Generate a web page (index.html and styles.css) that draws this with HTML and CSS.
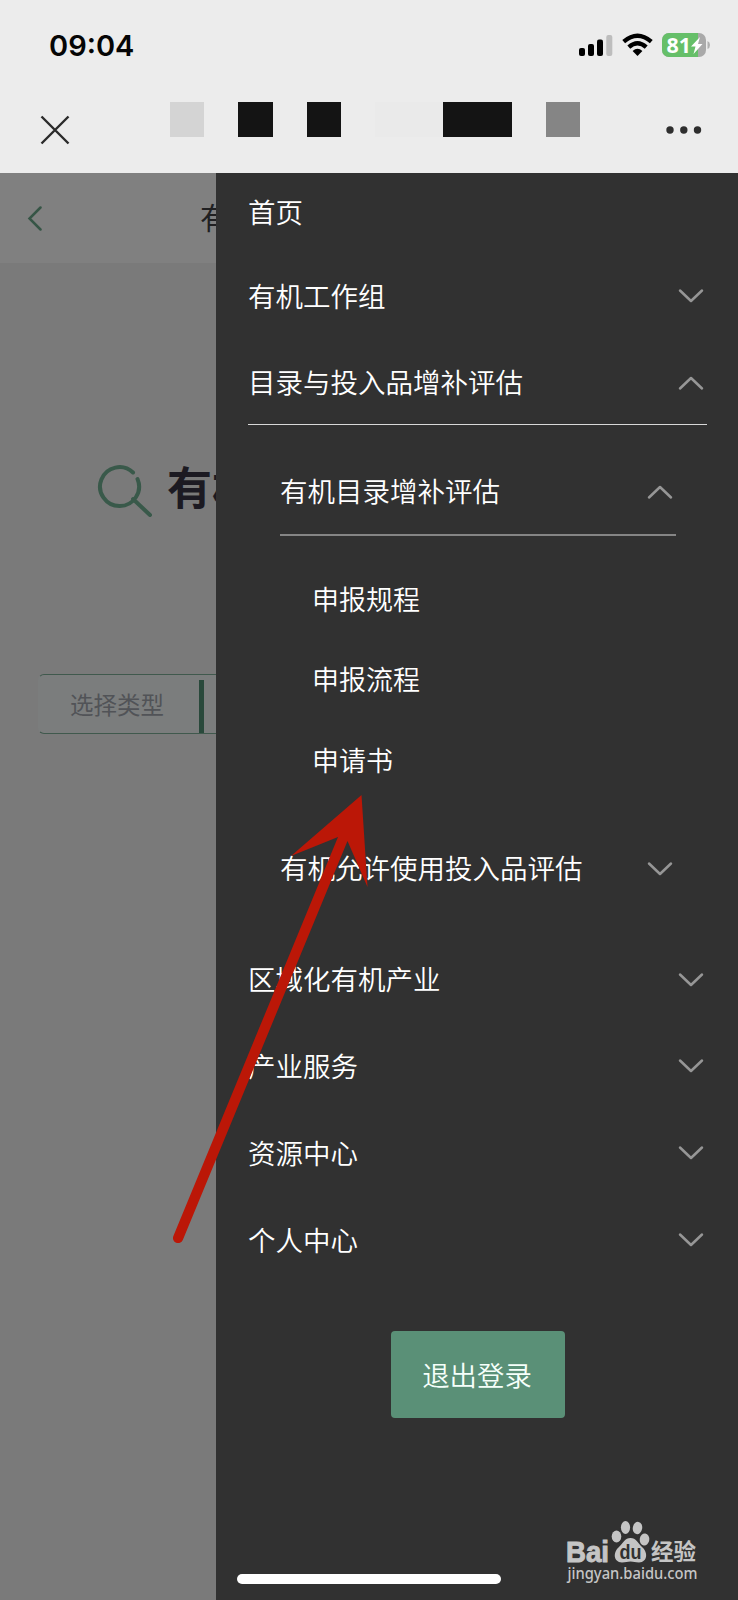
FILE: index.html
```html
<!DOCTYPE html>
<html lang="zh-CN">
<head>
<meta charset="utf-8">
<meta name="viewport" content="width=device-width">
<title>有机</title>
<link rel="stylesheet" href="styles.css">
</head>
<body>
<svg class="defs" width="0" height="0" aria-hidden="true">
  <symbol id="down" viewBox="0 0 26 16"><path d="M2 2.500 13 13 24 2.500"/></symbol>
  <symbol id="up" viewBox="0 0 26 16"><path d="M2 13.500 13 3 24 13.500"/></symbol>
</svg>
<div class="phone">
  <header class="top">
    <div class="status">
      <span class="time">09:04</span>
      <svg class="indicators" width="136" height="26" viewBox="0 0 136 26">
        <rect x="5" y="16" width="6" height="8" rx="2"/>
        <rect x="14" y="12" width="6" height="12" rx="2"/>
        <rect x="23" y="7.500" width="6" height="16.500" rx="2"/>
        <rect x="32.300" y="3" width="6" height="21" rx="2" fill="#bdbdbd"/>
        <g fill="none" stroke="#000" stroke-width="4.300">
          <path d="M49.700 9.600Q63.500-2.300 77.300 9.600"/>
          <path d="M54.800 15.200Q63.500 7.300 72.200 15.200"/>
        </g>
        <path d="M58.600 19.100Q63.500 14.600 68.400 19.100L63.500 24Z"/>
        <clipPath id="cell"><rect x="88" y="1" width="44" height="24" rx="7"/></clipPath>
        <g clip-path="url(#cell)"><rect x="88" y="1" width="44" height="24" fill="#a9a9a9"/><rect x="88" y="1" width="36" height="24" fill="#66bf69"/></g>
        <path d="M133.500 9Q136 10 136 13T133.500 17Z" fill="#b0b0b0"/>
        <text class="percent" x="92.500" y="20.500" textLength="24.500" lengthAdjust="spacingAndGlyphs">81</text>
        <path d="M126 5 117 14.500H121.500L119.500 22 128.500 12H124Z" fill="#fff"/>
      </svg>
    </div>
    <nav class="nav">
      <svg class="close" width="30" height="30" viewBox="0 0 30 30"><path d="m1.500 1.500 27 27m0-27-27 27"/></svg>
      <div class="mosaic"><i class="light"></i><i></i><i class="dark"></i><i></i><i class="dark"></i><i></i><i class="faint"></i><i class="faint"></i><i class="dark"></i><i class="dark"></i><i></i><i class="gray"></i></div>
      <svg class="more" width="36" height="8" viewBox="0 0 36 8"><circle cx="4" cy="4" r="3.700"/><circle cx="17.800" cy="4" r="3.700"/><circle cx="31.500" cy="4" r="3.700"/></svg>
    </nav>
  </header>
  <main class="body">
    <section class="page">
      <div class="pagebar">
        <svg class="back" width="16" height="26" viewBox="0 0 16 26"><path d="M13.500 2.500 2.500 13.500 13.500 24.500"/></svg>
        <span class="title">有机</span>
      </div>
      <div class="hero">
        <svg width="56" height="54" viewBox="0 0 56 54"><path d="M36 9.500A19.500 19.500 0 1 0 40.500 16M36 36 53 52"/></svg>
        <span>有机</span>
      </div>
      <div class="search"><span>选择类型</span><i></i></div>
    </section>
    <aside class="drawer">
      <div class="row first">首页</div>
      <div class="row">有机工作组<svg class="chev"><use href="#down"/></svg></div>
      <div class="row open">目录与投入品增补评估<svg class="chev"><use href="#up"/></svg></div>
      <div class="sub">
        <div class="row subopen">有机目录增补评估<svg class="chev"><use href="#up"/></svg></div>
        <div class="items"><div>申报规程</div><div>申报流程</div><div>申请书</div></div>
        <div class="row">有机允许使用投入品评估<svg class="chev"><use href="#down"/></svg></div>
      </div>
      <div class="row">区域化有机产业<svg class="chev"><use href="#down"/></svg></div>
      <div class="row">产业服务<svg class="chev"><use href="#down"/></svg></div>
      <div class="row">资源中心<svg class="chev"><use href="#down"/></svg></div>
      <div class="row">个人中心<svg class="chev"><use href="#down"/></svg></div>
      <button class="logout">退出登录</button>
    </aside>
  </main>
  <svg class="arrow" width="200" height="456" viewBox="170 792 200 456"><path d="M361.500 795 291 856 338 837 173.400 1236A5 5 0 0 0 182.800 1240L347.500 841 367.500 887Z"/></svg>
  <div class="home"></div>
  <svg class="mark" width="140" height="66" viewBox="562 1518 140 66">
    <text class="bai" x="566" y="1561.500" textLength="43" lengthAdjust="spacingAndGlyphs">Bai</text>
    <ellipse cx="616.500" cy="1536.500" rx="4.800" ry="6"/>
    <ellipse cx="625.500" cy="1527.500" rx="4.600" ry="6.500"/>
    <ellipse cx="637.500" cy="1528" rx="4.700" ry="6.200" transform="rotate(10 637.500 1528)"/>
    <ellipse cx="644.500" cy="1539.500" rx="4.800" ry="6" transform="rotate(8 644.500 1539.500)"/>
    <path d="M630.500 1538C636 1538 638 1543 642 1547 648 1552 648 1562 639 1562.500 635 1562.500 634 1561.500 630.500 1561.500S626 1562.500 622 1562.500C613 1562 613 1552 619 1547 623 1543 625 1538 630.500 1538Z"/>
    <text class="du" x="619.500" y="1558.500" textLength="22" lengthAdjust="spacingAndGlyphs">du</text>
    <text class="jy" x="651" y="1559.500" textLength="45" lengthAdjust="spacingAndGlyphs">经验</text>
    <text class="url" x="567.500" y="1579" textLength="130" lengthAdjust="spacingAndGlyphs">jingyan.baidu.com</text>
  </svg>
</div>
</body>
</html>
```
FILE: styles.css
```css
* { box-sizing: border-box; }
body { margin: 0; font-family: "Noto Sans CJK SC", sans-serif; }
.defs { position: absolute; }
.phone { position: relative; width: 738px; height: 1600px; overflow: hidden; }
.top { height: 173px; background: #ececec; }
.status { display: flex; justify-content: space-between; align-items: center; height: 90px; padding: 0 28px 0 49px; }
.time { padding-top: 2px; font: 600 29px/40px Inter, sans-serif; color: #050505; }
.percent { font: 700 21px "Open Sans", sans-serif; fill: #fff; }
.nav { display: flex; align-items: flex-start; height: 83px; padding: 12px 36px 0 40px; }
.close { margin-top: 12.5px; fill: none; stroke: #2b2b2b; stroke-width: 2.4; }
.mosaic { display: flex; width: 410px; height: 35px; margin-left: 100px; }
.mosaic i { flex: 1; }
.light { background: #d4d4d4; }
.dark { background: #141414; }
.faint { background: #eaeaea; }
.gray { background: #858585; }
.more { margin: 24px 0 0 auto; fill: #2e2e2e; }
.body { position: relative; height: 1427px; background: #7a7a7a; }
.pagebar { display: flex; align-items: center; height: 90px; padding-left: 27px; background: #808080; }
.back { fill: none; stroke: #365546; stroke-width: 2.5; stroke-linecap: round; }
.title { margin-left: 157px; padding-bottom: 4px; font-size: 30px; line-height: 40px; color: #202022; }
.hero { display: flex; align-items: center; height: 80px; margin-top: 185px; padding-left: 97px; }
.hero svg { margin-top: 3px; fill: none; stroke: #39594a; stroke-width: 4; stroke-linecap: round; }
.hero span { margin-left: 14px; padding-bottom: 4px; font-size: 45px; font-weight: 700; line-height: 60px; color: #1c1a22; }
.search { display: flex; height: 60px; width: 300px; margin: 146px 0 0 38px; padding: 5px 0 0 31px; border: 1px solid #40594d; border-left-color: transparent; border-radius: 6px; background: #7b7d7d; }
.search span { width: 129px; font-size: 23.5px; line-height: 48px; color: #515357; }
.search i { width: 5px; height: 53px; background: #29493b; }
.drawer { position: absolute; top: 0; left: 216px; width: 522px; height: 1427px; padding: 0 31px 0 32px; background: #313131; color: #fff; font-size: 27.5px; line-height: 40px; }
.row { display: flex; align-items: center; justify-content: space-between; height: 86.8px; padding-bottom: 3px; font-weight: 350; }
.row.first { height: 80px; padding-bottom: 4px; }
.row.open { height: 85.5px; padding-bottom: 2px; border-bottom: 1px solid #d8d8d8; }
.sub { padding: 24px 31px 24px 32px; }
.row.subopen { border-bottom: 2px solid #858585; }
.items { padding: 23px 0 24px 32px; font-size: 27px; font-weight: 350; }
.items div { height: 80.8px; padding-top: 19.5px; }
.chev { width: 26px; height: 16px; margin: 3px 3px 0 0; fill: none; stroke: #969696; stroke-width: 2.5; stroke-linecap: round; stroke-linejoin: round; }
.logout { display: block; width: 174px; height: 87px; margin: 48px 0 0 143px; padding: 0 2px 2px 0; border: 0; border-radius: 4px; background: #5a9077; color: #f5fffa; font: 350 27.4px/40px "Noto Sans CJK SC", sans-serif; }
.arrow { position: absolute; left: 170px; top: 792px; fill: #bb1707; }
.home { position: absolute; left: 237px; bottom: 16px; width: 264px; height: 10px; border-radius: 5px; background: #fff; }
.mark { position: absolute; left: 562px; top: 1518px; fill: #c5c5c5; }
.bai { font: 700 30px "Liberation Sans", sans-serif; stroke: #c5c5c5; stroke-width: 1px; }
.du { font: 700 20px "Liberation Sans", sans-serif; fill: #313131; }
.jy { font: 700 23px "Noto Sans CJK SC", sans-serif; }
.url { font: 500 17px "Noto Sans", sans-serif; }
```
